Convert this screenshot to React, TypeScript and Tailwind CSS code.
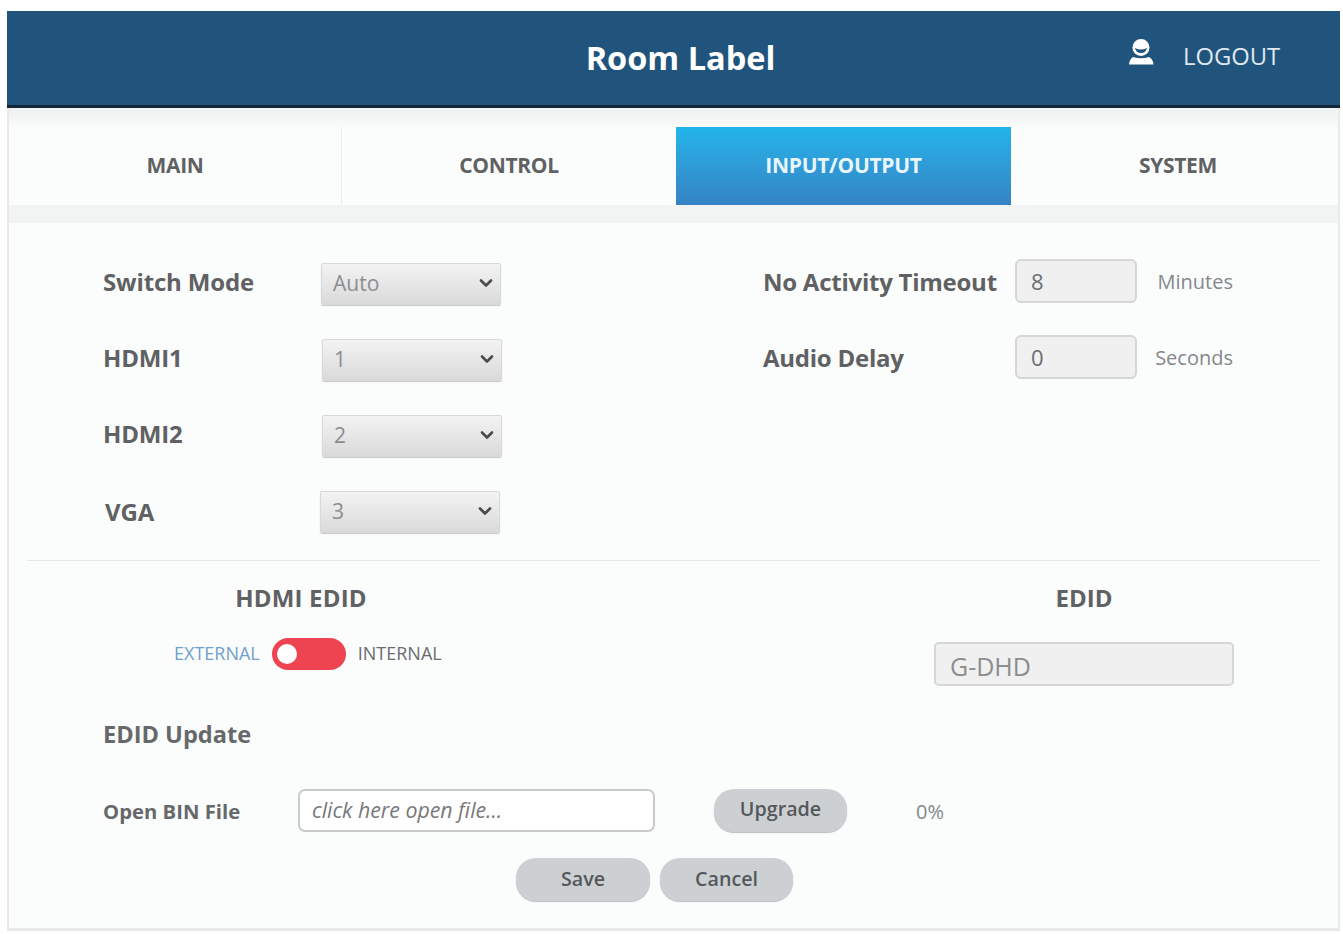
import { ChevronDown } from "lucide-react";

const tabs = ["MAIN", "CONTROL", "INPUT/OUTPUT", "SYSTEM"];

function SelectRow({ label, value, offset, labelClass = "pb-[4px]" }: { label: string; value: string; offset: string; labelClass?: string }) {
  return (
    <div className="flex h-[76px] items-center">
      <span className={`w-[218px] text-[24px] font-bold tracking-[-0.15px] text-[#5f6163] ${labelClass}`}>{label}</span>
      <div className={`relative h-[42px] w-[180px] ${offset}`}>
        <select
          defaultValue={value}
          className="h-full w-full appearance-none rounded-[2px] border border-[#d8d8d8] bg-gradient-to-b from-[#f3f3f3] to-[#dadada] pl-[11px] text-[21px] text-[#8b8d8f] shadow-[0_1px_1px_#c8c8c8] outline-none"
        >
          <option>{value}</option>
        </select>
        <ChevronDown
          size={20}
          strokeWidth={3.2}
          className="pointer-events-none absolute right-[5px] top-[10px] text-[#4a4c4e]"
        />
      </div>
    </div>
  );
}

function NumberRow({ label, value, unit }: { label: string; value: string; unit: string }) {
  return (
    <div className="flex h-[76px] items-center pb-[4px]">
      <span className="w-[252px] text-[24px] font-bold tracking-[-0.25px] text-[#5f6163]">{label}</span>
      <input
        defaultValue={value}
        className="mb-[2px] h-[44px] w-[122px] rounded-[6px] border-2 border-[#d4d6d7] bg-[#f0f0f0] pl-[14px] text-[22px] text-[#6b6d6f] outline-none"
      />
      <span className="w-[96px] text-right text-[20px] text-[#85878a]">{unit}</span>
    </div>
  );
}

function PillButton({ label, width, textClass = "pb-[2px]" }: { label: string; width: string; textClass?: string }) {
  return (
    <button className={`h-[43px] ${width} ${textClass} rounded-[20px] bg-[#cdd0d3] text-[19.7px] font-semibold text-[#55585b] shadow-[0_1px_1px_#bbbec0]`}>
      {label}
    </button>
  );
}

export default function App() {
  return (
    <div className="h-[934px] bg-white pb-[3px] pl-[7px] pr-[3px] pt-[11px] font-['Open_Sans',sans-serif]">
      <div className="flex h-[920px] flex-col">
        <header className="relative flex h-[97px] shrink-0 items-center justify-center border-b-[3px] border-[#13263a] bg-[#20547c] pl-[14px]">
          <h1 className="text-[32.5px] font-bold text-white">Room Label</h1>
          <div className="absolute left-[1122px] top-[28px] flex items-center gap-[29px]">
            <svg width="25" height="26" viewBox="0 0 25 26" fill="#fff" className="-mt-[9px]">
              <circle cx="12" cy="8.5" r="8.5" />
              <path d="M6 9q6 3 12 0q-1 5-6 5t-6-5z" fill="#20547c" />
              <path d="M4 18q8 2.500 16 0q4 2 4.500 7.500H0q.5-5.500 4-7.500z" />
            </svg>
            <span className="text-[23.8px] text-[#dfe8ef]">LOGOUT</span>
          </div>
        </header>
        <div className="flex flex-1 flex-col border-b-[3px] border-l-2 border-r-2 border-[#e8eaea] bg-[#fbfcfc]">
          <div className="h-[19px] shrink-0 bg-gradient-to-b from-[#eef1f1] to-[#fafbfb]" />
          <nav className="flex h-[78px] shrink-0">
            {tabs.map((tab, i) => (
              <div
                key={tab}
                className={
                  tab === "INPUT/OUTPUT"
                    ? "flex w-[335px] items-center justify-center bg-gradient-to-b from-[#21b4ea] to-[#3583c4] text-[21px] font-bold tracking-[-0.3px] text-[#e9f5fb]"
                    : `flex items-center justify-center text-[21px] font-bold tracking-[-0.3px] text-[#5f6163] ${i === 0 ? "w-[333px] border-r border-[#eceeee]" : i === 1 ? "w-[334px]" : "flex-1 pl-[7px]"}`
                }
              >
                {tab}
              </div>
            ))}
          </nav>
          <div className="h-[18px] shrink-0 bg-[#f2f4f4]" />
          <main className="flex flex-1 flex-col">
            <div className="flex h-[337px] pl-[94px] pt-[23px]">
              <div className="w-[660px]">
                <SelectRow label="Switch Mode" value="Auto" offset="" />
                <SelectRow label="HDMI1" value="1" offset="ml-px" />
                <SelectRow label="HDMI2" value="2" offset="ml-px" />
                <SelectRow label="VGA" value="3" offset="-ml-[3px]" labelClass="ml-[2px]" />
              </div>
              <div>
                <NumberRow label="No Activity Timeout" value="8" unit="Minutes" />
                <NumberRow label="Audio Delay" value="0" unit="Seconds" />
              </div>
            </div>
            <div className="mx-[18px] h-px shrink-0 bg-[#e6e8e8]" />
            <div className="flex h-[130px] pt-[19px]">
              <div className="w-[590px] pl-[165px]">
                <div className="w-[254px] text-center text-[24px] font-bold tracking-[0.2px] text-[#5f6163]">HDMI EDID</div>
                <div className="mt-[22px] flex items-center">
                  <span className="pb-[2px] text-[18px] text-[#6f9fcb]">EXTERNAL</span>
                  <span className="relative ml-[12px] h-[32px] w-[74px] rounded-full bg-[#ee4350]">
                    <span className="absolute left-[5px] top-[6px] h-[20px] w-[20px] rounded-full bg-white" />
                  </span>
                  <span className="ml-[12px] pb-[2px] text-[18px] text-[#6a6c6e]">INTERNAL</span>
                </div>
              </div>
              <div className="ml-[335px] w-[300px]">
                <div className="text-center text-[24px] font-bold text-[#5f6163]">EDID</div>
                <input
                  defaultValue="G-DHD"
                  className="mt-[26px] h-[44px] w-[300px] rounded-[5px] border-2 border-[#d4d6d7] bg-[#f0f0f0] pl-[14px] pt-[4px] text-[25px] text-[#8b8d8f] outline-none"
                />
              </div>
            </div>
            <div className="pl-[94px] pt-[26px]">
              <div className="text-[23.6px] font-bold text-[#66686a]">EDID Update</div>
              <div className="mt-[37px] flex items-center">
                <span className="w-[195px] text-[20.3px] font-bold text-[#66686a]">Open BIN File</span>
                <input
                  placeholder="click here open file..."
                  className="h-[43px] w-[357px] rounded-[7px] border-2 border-[#c8cacb] bg-white pb-[2px] pl-[12px] text-[21.3px] italic text-[#77797b] outline-none placeholder:text-[#77797b]"
                />
                <div className="ml-[59px]">
                  <PillButton label="Upgrade" width="w-[133px]" textClass="pb-[4px]" />
                </div>
                <span className="ml-[69px] pt-[2px] text-[20px] text-[#85878a]">0%</span>
              </div>
              <div className="mt-[26px] flex gap-[10px] pl-[413px]">
                <PillButton label="Save" width="w-[134px]" />
                <PillButton label="Cancel" width="w-[133px]" />
              </div>
            </div>
          </main>
        </div>
      </div>
    </div>
  );
}
